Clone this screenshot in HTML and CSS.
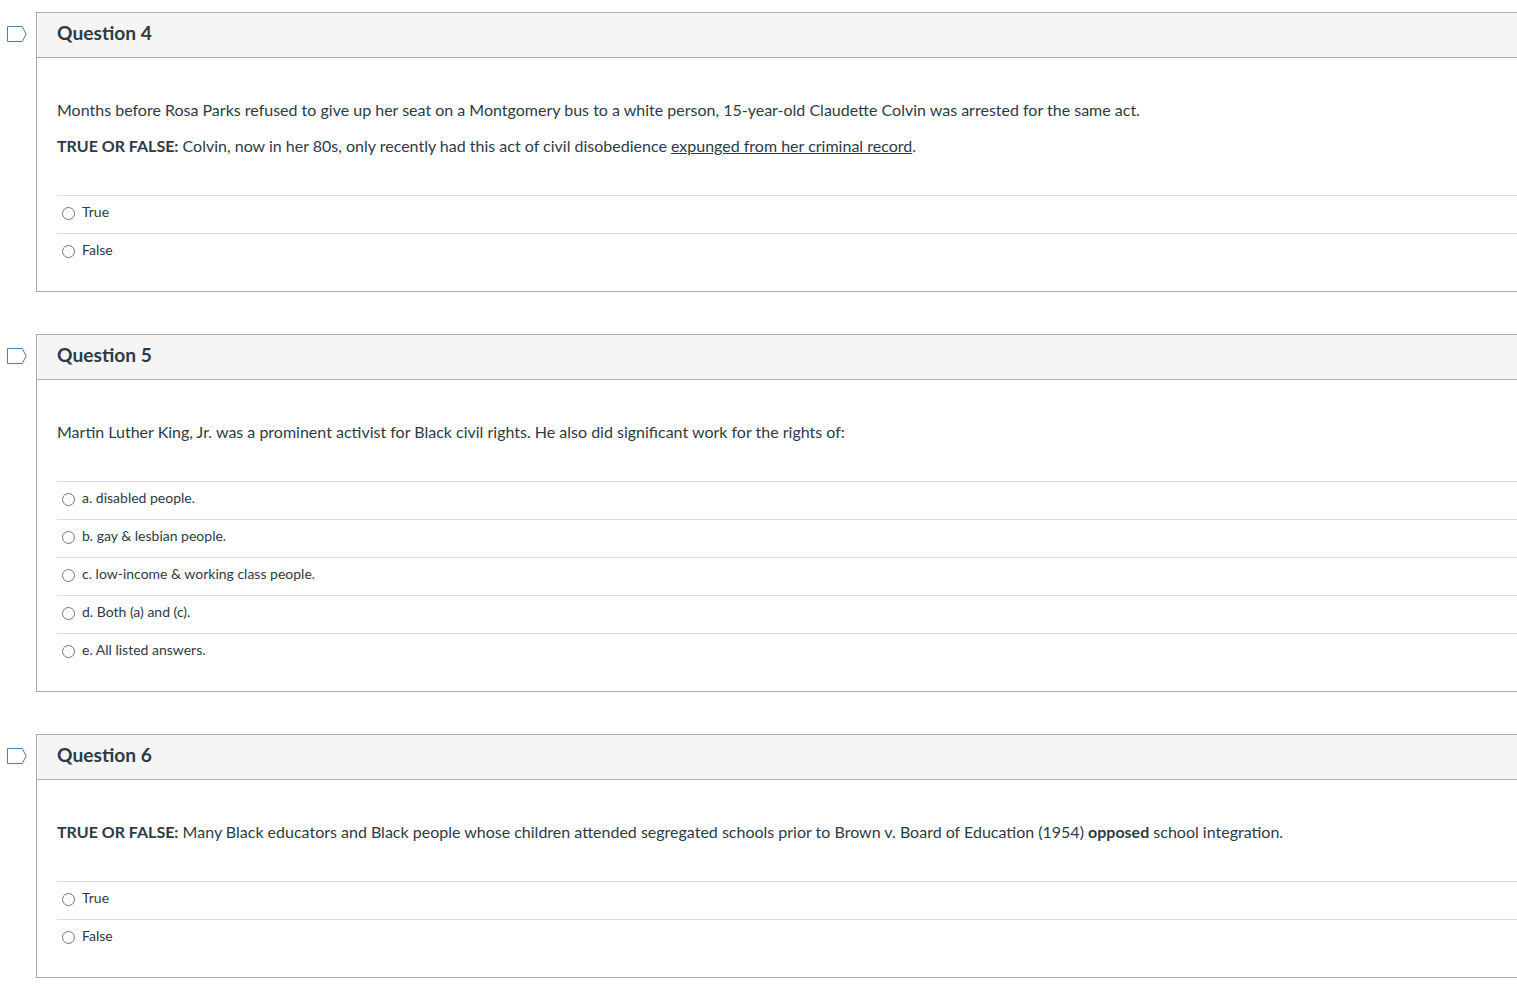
FILE: index.html
```html
<!DOCTYPE html>
<html lang="en">
<head>
<meta charset="utf-8">
<title>Quiz</title>
<link rel="stylesheet" href="styles.css">
</head>
<body>
<main class="quiz">
  <section class="question">
    <div class="flag"><svg width="20" height="16" viewBox="0 0 20 16"><path class="flag-path" d="M.5.5h14.7l4 7.5-4 7.5H.5z"/></svg></div>
    <div class="card">
      <h2 class="head">Question 4</h2>
      <div class="body">
        <div class="text">
          <p>Months before Rosa Parks refused to give up her seat on a Montgomery bus to a white person, 15-year-old Claudette Colvin was arrested for the same act.</p>
          <p><strong>TRUE OR FALSE:</strong> Colvin, now in her 80s, only recently had this act of civil disobedience <a href="#">expunged from her criminal record</a>.</p>
        </div>
        <ul class="answers">
          <li><span class="radio"></span><span>True</span></li>
          <li><span class="radio"></span><span>False</span></li>
        </ul>
      </div>
    </div>
  </section>
  <section class="question">
    <div class="flag"><svg width="20" height="16" viewBox="0 0 20 16"><path class="flag-path" d="M.5.5h14.7l4 7.5-4 7.5H.5z"/></svg></div>
    <div class="card">
      <h2 class="head">Question 5</h2>
      <div class="body">
        <div class="text">
          <p>Martin Luther King, Jr. was a prominent activist for Black civil rights. He also did significant work for the rights of:</p>
        </div>
        <ul class="answers">
          <li><span class="radio"></span><span>a. disabled people.</span></li>
          <li><span class="radio"></span><span>b. gay &amp; lesbian people.</span></li>
          <li><span class="radio"></span><span>c. low-income &amp; working class people.</span></li>
          <li><span class="radio"></span><span>d. Both (a) and (c).</span></li>
          <li><span class="radio"></span><span>e. All listed answers.</span></li>
        </ul>
      </div>
    </div>
  </section>
  <section class="question">
    <div class="flag"><svg width="20" height="16" viewBox="0 0 20 16"><path class="flag-path" d="M.5.5h14.7l4 7.5-4 7.5H.5z"/></svg></div>
    <div class="card">
      <h2 class="head">Question 6</h2>
      <div class="body">
        <div class="text">
          <p><strong>TRUE OR FALSE:</strong> Many Black educators and Black people whose children attended segregated schools prior to Brown v. Board of Education (1954) <strong>opposed</strong> school integration.</p>
        </div>
        <ul class="answers">
          <li><span class="radio"></span><span>True</span></li>
          <li><span class="radio"></span><span>False</span></li>
        </ul>
      </div>
    </div>
  </section>
</main>
</body>
</html>
```
FILE: styles.css
```css
* { box-sizing: border-box; }
html, body { margin: 0; padding: 0; }
body {
  background: #fff;
  color: #2d3b45;
  font-family: Lato, "Liberation Sans", sans-serif;
  font-size: 16px;
  overflow: hidden;
  height: 997px;
}
.quiz { padding-top: 12px; display: flex; flex-direction: column; gap: 42px; }
.question { display: flex; align-items: flex-start; }
.flag { width: 36px; flex: none; padding: 14px 0 0 7px; height: 40px; }
.flag svg { display: block; }
.flag-path { fill: #fff; stroke: #4f7f9b; stroke-width: 1; }
.card {
  flex: 1;
  min-width: 0;
  border: 1px solid #aaa;
  border-right: 0;
}
.head {
  margin: 0;
  height: 45px;
  padding: 0 20px;
  background: #f5f5f5;
  border-bottom: 1px solid #aaa;
  font-size: 19.2px;
  font-weight: 700;
  line-height: 40px;
}
.body { padding: 0 0 20px 20px; }
.text { padding-top: 40px; padding-bottom: 25px; }
.text p { margin: 0 0 12px; line-height: 24px; }
.text a { color: #2d3b45; text-decoration: underline; }
.text strong { font-weight: 700; }
.answers { list-style: none; margin: 0; padding: 0; }
.answers li {
  height: 38px;
  border-top: 1px solid #ddd;
  display: flex;
  align-items: flex-start;
  padding: 7px 0 0 5px;
  font-size: 14px;
  line-height: 18px;
}
.radio {
  width: 13px;
  height: 13px;
  margin: 4px 7px 0 0;
  border: 1px solid #767676;
  border-radius: 50%;
  flex: none;
  background: #fff;
}
```
